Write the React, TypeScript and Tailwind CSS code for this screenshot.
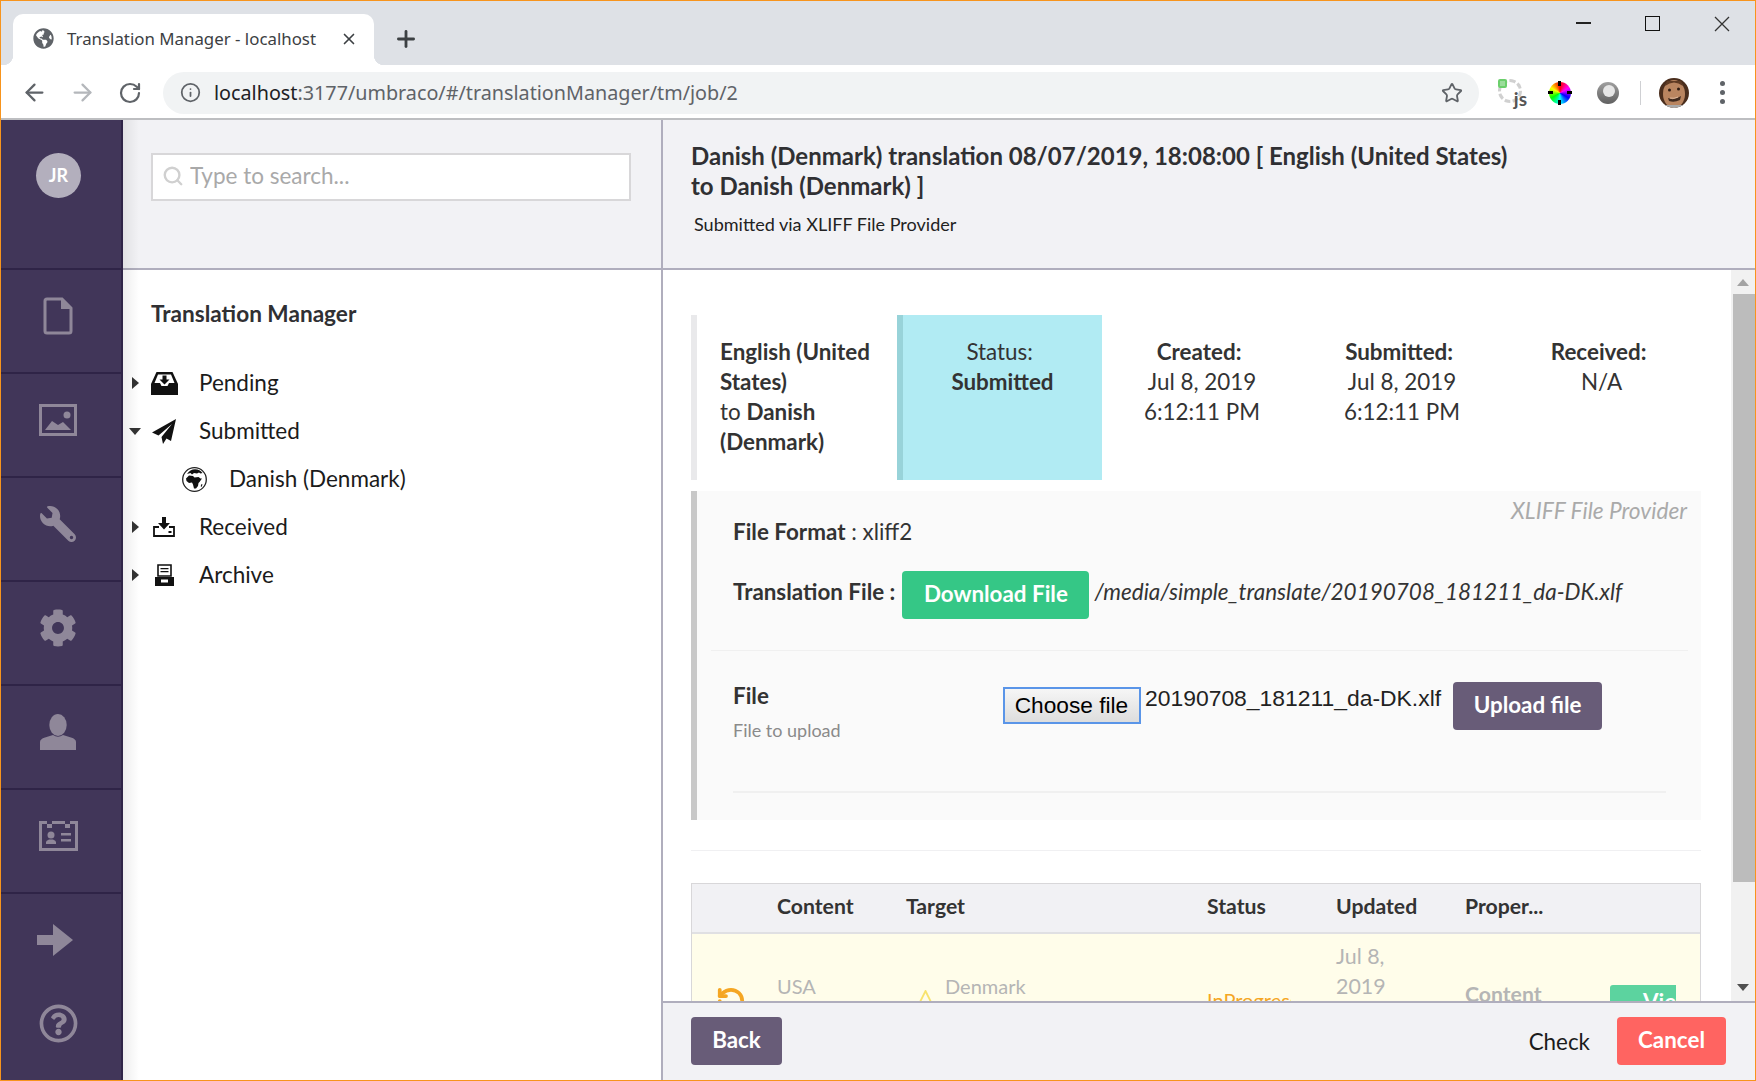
import React from "react";
import { FaGlobeAmericas, FaWrench, FaCog, FaRegQuestionCircle } from "react-icons/fa";
import { ArrowLeft, ArrowRight, RotateCw, RotateCcw, Info, Star, X, Plus, Search } from "lucide-react";

const lato = "[font-family:Lato,sans-serif]";

function Doc() {
  return (
    <svg width="30" height="38" viewBox="0 0 30 38" fill="none">
      <path d="M5 2h14l9 9v23a2 2 0 0 1-2 2H4a2 2 0 0 1-2-2V4a2 2 0 0 1 2-2z" stroke="currentColor" strokeWidth="3" />
      <path d="M18 2v10h10z" fill="currentColor" />
    </svg>
  );
}
function Picture() {
  return (
    <svg width="38" height="32" viewBox="0 0 38 32" fill="none">
      <rect x="1.5" y="1.5" width="35" height="29" stroke="currentColor" strokeWidth="3" />
      <circle cx="28" cy="11" r="3.5" fill="currentColor" />
      <path d="M6 26l7-9 6 4 5-3 8 8z" fill="currentColor" />
    </svg>
  );
}
function Person() {
  return (
    <svg width="36" height="36" viewBox="0 0 36 36" fill="currentColor">
      <ellipse cx="18" cy="11" rx="8.7" ry="11" />
      <path d="M0 36v-8q0-3 5-4.500l8-2.500q5 3.500 10 0l8 2.500q5 1.500 5 4.500v8z" />
    </svg>
  );
}
function IdCard() {
  return (
    <svg width="39" height="30" viewBox="0 0 39 30" fill="none">
      <path d="M8 1.500H1.500v27h36v-27H31M13 1.500h13" stroke="currentColor" strokeWidth="3" />
      <rect x="8" y="3" width="5" height="4" fill="currentColor" />
      <rect x="26" y="3" width="5" height="4" fill="currentColor" />
      <circle cx="12" cy="14" r="3.500" fill="currentColor" />
      <path d="M7 23v-2q0-1.500 3-2.500h4q3 1 3 2.500v2z" fill="currentColor" />
      <rect x="22" y="12" width="10" height="2.500" fill="currentColor" />
      <rect x="22" y="18" width="10" height="2.500" fill="currentColor" />
    </svg>
  );
}
function BigArrow() {
  return (
    <svg width="36" height="32" viewBox="0 0 36 32" fill="currentColor">
      <path d="M0 11h16V0l20 16-20 16V21H0z" />
    </svg>
  );
}
function PendingIcon() {
  return (
    <svg width="27" height="23" viewBox="0 0 27 23">
      <path d="M5.500 0h16L27 12v11H0V12z" fill="#111" />
      <path d="M7 2.500h13l3.500 8.500h-5.500l-1.500 3h-6l-1.500-3H3.500z" fill="#fff" />
      <path d="M11.500 3.500h4v4h3l-5 5-5-5h3z" fill="#111" />
    </svg>
  );
}
function PlaneIcon() {
  return (
    <svg width="24" height="25" viewBox="0 0 24 25">
      <path d="M24 0L0 13.500l6.500 3L20 5 9.500 18l1.500 7 3.500-5.500 4.500 2.500z" fill="#111" />
    </svg>
  );
}
function GlobeIcon() {
  return (
    <svg width="25" height="25" viewBox="0 0 25 25">
      <circle cx="12.500" cy="12.500" r="11.800" fill="#fff" stroke="#222" strokeWidth="1.300" />
      <path d="M5 7q3-4.500 8-4.700 5 .2 7.500 3.700l-2 .5-1.500-1-2 1-3-.5-2 1.500-1.500-1.500z" fill="#111" />
      <path d="M4 11.500l3-3 4 .5 1.500 1.500 4-.5 2 1.500 1.500 0-2.500 3.500-1 1-.5 3-2 2.500h-2l-1-4-1-2-3 .5-2.500-2z" fill="#111" />
      <path d="M19.500 17l1 .5-1 2.500-.8-.8z" fill="#111" />
    </svg>
  );
}
function ReceivedIcon() {
  return (
    <svg width="22" height="20" viewBox="0 0 22 20">
      <path d="M9 0h4v6h4l-6 6.500L5 6h4z" fill="#111" />
      <path d="M6 10H1v9h20v-9h-5" fill="none" stroke="#111" strokeWidth="1.800" />
      <rect x="15.500" y="14" width="3" height="2" fill="#111" />
    </svg>
  );
}
function ArchiveIcon() {
  return (
    <svg width="19" height="22" viewBox="0 0 19 22">
      <path d="M3 1h13v11H3z" fill="none" stroke="#111" strokeWidth="1.600" />
      <path d="M5.500 4h8v1.300h-8zM5.500 7h8v1.300h-8z" fill="#111" />
      <path d="M0 13h19v9H0z" fill="#111" />
      <path d="M6 15.500h7v3H6z" fill="#fff" />
    </svg>
  );
}
function TreeRow({ open, icon, label, indent }: { open?: boolean; icon: React.ReactNode; label: string; indent?: boolean }) {
  return (
    <div className="flex h-[48px] items-center">
      <div className="flex w-[24px] shrink-0 justify-center">
        {indent ? null : open ? (
          <svg width="12" height="7" viewBox="0 0 12 7"><path d="M0 0h12L6 7z" fill="#333" /></svg>
        ) : (
          <svg width="7" height="12" viewBox="0 0 7 12"><path d="M0 0l7 6-7 6z" fill="#333" /></svg>
        )}
      </div>
      <div className={indent ? "ml-[35px] mr-[22px] flex w-[25px] shrink-0 justify-center" : "mr-[18px] flex w-[34px] shrink-0 justify-center"}>{icon}</div>
      <div className="text-[22.5px] text-[#1b1b1b]">{label}</div>
    </div>
  );
}
function SideItem({ children }: { children: React.ReactNode }) {
  return <div className="flex h-[104px] items-start justify-center border-b-2 border-[#2f2447] pr-[6px] pt-[26px]"><div className="flex h-[40px] items-center justify-center">{children}</div></div>;
}

function WindowControls() {
  return (
    <div className="ml-auto flex h-full items-start">
      <div className="mt-[21px] h-[2px] w-[15px] bg-[#222]" />
      <div className="ml-[54px] mt-[15px] h-[15px] w-[15px] border-[1.5px] border-[#111]" />
      <svg className="ml-[54px] mr-[25px] mt-[15px]" width="16" height="16" viewBox="0 0 16 16"><path d="M1 1l14 14M15 1L1 15" stroke="#333" strokeWidth="1.300" /></svg>
    </div>
  );
}

function Extensions() {
  return (
    <>
      <div className="relative ml-[19px] h-[28px] w-[28px]">
        <div className="h-[24px] w-[24px] rounded-full border-[3px] border-dashed border-[#d0d0d0]" />
        <div className="absolute left-0 top-0 h-[9px] w-[9px] rounded-[2px] border-2 border-[#6ccf6c] bg-[#9bdd9b]" />
        <div className="absolute -right-[1px] bottom-[0px] [font-family:Lato,sans-serif] text-[19px] leading-[17px] font-bold text-[#555]">js</div>
      </div>
      <div className="relative ml-[23px] h-[22px] w-[22px] rounded-full bg-[conic-gradient(#ff0000,#ff00ff,#0000ff,#00ffff,#00ff00,#ffff00,#ff0000)]">
        <div className="absolute left-[9px] -top-[1px] h-[5px] w-[3px] bg-black" />
        <div className="absolute left-[9px] -bottom-[1px] h-[5px] w-[3px] bg-black" />
        <div className="absolute -left-[1px] top-[9px] h-[3px] w-[5px] bg-black" />
        <div className="absolute -right-[1px] top-[9px] h-[3px] w-[5px] bg-black" />
      </div>
      <div className="ml-[26px] flex h-[22px] w-[22px] items-center justify-center rounded-full bg-gradient-to-b from-[#a0a0a0] to-[#606060]">
        <div className="ml-[2px] -mt-[3px] h-[12px] w-[12px] rounded-full bg-[#e6e6e6]" />
      </div>
      <div className="ml-[21px] h-[24px] w-[1px] bg-[#cfd0d3]" />
      <svg className="ml-[18px]" width="30" height="30" viewBox="0 0 30 30">
        <defs><clipPath id="av"><circle cx="15" cy="15" r="15" /></clipPath></defs>
        <g clipPath="url(#av)">
          <rect width="30" height="30" fill="#4a2e1d" />
          <ellipse cx="15" cy="16" rx="11" ry="14" fill="#b98560" />
          <path d="M6 8q9-7 18 0l-2-5H8z" fill="#5f3b24" />
          <circle cx="10.500" cy="12" r="1.500" fill="#2e1c12" />
          <circle cx="19.500" cy="11" r="1.500" fill="#2e1c12" />
          <path d="M9 20q6 3 13-2l-1 4q-6 3-11 1z" fill="#3f2a1f" />
          <path d="M11 20q4 1 8-1" stroke="#d9b59a" strokeWidth="1" fill="none" />
          <rect y="27" width="30" height="3" fill="#a9a9a9" />
        </g>
      </svg>
    </>
  );
}

function Chrome() {
  return (
    <div className="shrink-0 [font-family:'Noto_Sans',sans-serif]">
      <div className="flex h-[64px] bg-[#dee1e6] pl-[12px]">
        <div className="relative mt-[13px] flex h-[51px] w-[361px] items-center rounded-t-[10px] bg-white pb-[2px] pl-[20px]">
          <div className="absolute -left-[10px] bottom-0 h-[10px] w-[10px] bg-[radial-gradient(circle_at_0_0,#dee1e6_10px,#ffffff_10.5px)]" />
          <div className="absolute -right-[10px] bottom-0 h-[10px] w-[10px] bg-[radial-gradient(circle_at_100%_0,#dee1e6_10px,#ffffff_10.5px)]" />
          <FaGlobeAmericas size={21} color="#5f6368" />
          <span className="ml-[13px] w-[273px] text-[16.850px] text-[#3c4043] whitespace-nowrap">Translation Manager - localhost</span>
          <X size={18} color="#3c4043" strokeWidth={2.2} />
        </div>
        <div className="ml-[19px] mt-[25px] h-[26px] text-[#3c4043]"><Plus size={26} strokeWidth={2.6} /></div>
        <WindowControls />
      </div>
      <div className="flex h-[55px] items-center border-b-2 border-[#bdbec1] bg-white pb-[3px] pt-[5px]">
        <ArrowLeft className="ml-[20px]" size={27} color="#5f6368" strokeWidth={2} />
        <ArrowRight className="ml-[21px]" size={27} color="#b4b7bb" strokeWidth={2} />
        <RotateCw className="ml-[22px]" size={24} color="#5f6368" strokeWidth={2.2} />
        <div className="ml-[21px] flex h-[42px] w-[1316px] items-center rounded-full bg-[#f1f3f4] pl-[17px] pr-[16px]">
          <Info size={21} color="#5f6368" strokeWidth={2} />
          <div className="ml-[13px] flex-1 text-[19.750px] whitespace-nowrap text-[#5f6368]"><span className="text-[#202124]">localhost</span>:3177/umbraco/#/translationManager/tm/job/2</div>
          <Star size={22} color="#5f6368" strokeWidth={2} />
        </div>
        <Extensions />
        <div className="ml-[31px] flex flex-col gap-[4px]">
          <div className="h-[5px] w-[5px] rounded-full bg-[#5f6368]" />
          <div className="h-[5px] w-[5px] rounded-full bg-[#5f6368]" />
          <div className="h-[5px] w-[5px] rounded-full bg-[#5f6368]" />
        </div>
      </div>
    </div>
  );
}

function Sidebar() {
  return (
    <div className="flex w-[122px] shrink-0 flex-col border-r-2 border-[#2f2447] bg-[#413659] text-[#8f8799]">
      <div className="flex h-[150px] shrink-0 justify-center border-b-2 border-[#2f2447] pr-[5px] pt-[33px]">
        <div className="flex h-[45px] w-[45px] items-center justify-center rounded-full bg-[#b3afbd] text-[18px] font-bold text-white">JR</div>
      </div>
      <SideItem><Doc /></SideItem>
      <SideItem><Picture /></SideItem>
      <SideItem><FaWrench size={36} className="-scale-x-100" /></SideItem>
      <SideItem><FaCog size={38} /></SideItem>
      <SideItem><Person /></SideItem>
      <SideItem><IdCard /></SideItem>
      <div className="flex flex-col items-center pr-[6px] pt-[30px]">
        <div className="-ml-[6px]"><BigArrow /></div>
        <FaRegQuestionCircle size={39} className="mt-[48px]" />
      </div>
    </div>
  );
}

function TreePanel() {
  return (
    <div className="relative flex w-[540px] shrink-0 flex-col border-r-2 border-[#b0aebd] bg-white">
      <div className="pointer-events-none absolute inset-y-0 left-0 w-[16px] bg-gradient-to-r from-[#00000012] to-transparent" />
      <div className="h-[150px] shrink-0 border-b-2 border-[#b0aebd] bg-[#f2f2f5] pl-[28px] pt-[33px]">
        <div className="flex h-[48px] w-[480px] items-center border-2 border-[#d8d7d9] bg-white pb-[2px] pl-[9px]">
          <Search size={22} color="#d0d0d0" strokeWidth={2.6} />
          <input readOnly placeholder="Type to search..." className="ml-[6px] flex-1 bg-transparent text-[22.5px] outline-none placeholder:text-[#a9a9a9]" />
        </div>
      </div>
      <div className="pt-[29px]">
        <div className="pl-[28px] text-[22.6px] leading-[30px] font-bold text-[#303033]">Translation Manager</div>
        <div className="mt-[30px]">
          <TreeRow icon={<PendingIcon />} label="Pending" />
          <TreeRow open icon={<PlaneIcon />} label="Submitted" />
          <TreeRow indent icon={<GlobeIcon />} label="Danish (Denmark)" />
          <TreeRow icon={<ReceivedIcon />} label="Received" />
          <TreeRow icon={<ArchiveIcon />} label="Archive" />
        </div>
      </div>
    </div>
  );
}

function InfoRow() {
  return (
    <div className="grid h-[165px] w-[1010px] grid-cols-[206px_205px_200px_200px_199px] text-center text-[22.4px] leading-[30px] text-[#333]">
      <div className="border-l-[6px] border-[#e9e9eb] pl-[23px] pt-[22px] text-left">
        <b>English (United States)</b><br />to <b>Danish (Denmark)</b>
      </div>
      <div className="border-l-[6px] border-[#98d3d9] bg-[#b1ebf3] pt-[22px]">Status:{"\u00a0"}<br /><b>Submitted</b></div>
      <div className="pt-[22px]"><b>Created:</b>{"\u00a0"}<br />Jul 8, 2019<br />6:12:11 PM</div>
      <div className="pt-[22px]"><b>Submitted:</b>{"\u00a0"}<br />Jul 8, 2019<br />6:12:11 PM</div>
      <div className="pt-[22px]"><b>Received:</b>{"\u00a0"}<br />N/A</div>
    </div>
  );
}

function ProviderBox() {
  return (
    <div className="mt-[11px] h-[329px] w-[1010px] border-l-[6px] border-[#c8c8c8] bg-[#fafafa] text-[22.4px] leading-[30px] text-[#333]">
      <div className="flex justify-between pl-[36px] pr-[14px]">
        <div className="mt-[26px]"><b>File Format</b> : xliff2</div>
        <div className="mt-[5px] text-[22.7px] italic text-[#aaaaaa]">XLIFF File Provider</div>
      </div>
      <div className="mt-[24px] flex items-center pl-[36px]">
        <b className="mb-[6px] whitespace-nowrap">Translation File :</b>
        <div className="ml-[7px] flex h-[48px] w-[187px] items-center justify-center rounded-[4px] bg-[#35c786] pb-[2px] font-bold text-white">Download File</div>
        <i className="mb-[6px] ml-[5px] text-[22.5px] whitespace-nowrap">/media/simple_translate/20190708_181211_da-DK.xlf</i>
      </div>
      <div className="ml-[14px] mt-[31px] h-[1px] w-[977px] bg-[#f0f0f0]" />
      <div className="ml-[36px] mr-[35px] mt-[30px] flex h-[112px] items-start border-b-2 border-[#f0f0f0]">
        <div className="w-[270px]">
          <b>File</b>
          <div className="mt-[7px] text-[18px] leading-[24px] text-[#8a8a8a]">File to upload</div>
        </div>
        <div className="mt-[6px] flex h-[37px] w-[138px] shrink-0 items-center justify-center border-2 border-[#5a95e8] bg-gradient-to-b from-[#f6f6f6] to-[#dddddd] pb-[1px] pr-[1px] [font-family:'Liberation_Sans',sans-serif] text-[22.7px] text-black">Choose file</div>
        <div className="ml-[4px] mt-[2px] [font-family:'Liberation_Sans',sans-serif] text-[22.9px] whitespace-nowrap text-[#222]">20190708_181211_da-DK.xlf</div>
        <div className="ml-[12px] mt-[1px] flex h-[48px] w-[149px] shrink-0 items-center justify-center rounded-[4px] bg-[#685c78] pb-[2px] font-bold text-white">Upload file</div>
      </div>
    </div>
  );
}

function JobTable() {
  return (
    <div className="mt-[32px] w-[1010px] border border-[#d8d7d9] text-[22.4px] leading-[30px]">
      <div className="grid h-[50px] grid-cols-[85px_129px_301px_129px_129px_145px_1fr] items-center border-b-2 border-[#e0e0e3] bg-[#f1f1f4] pb-[4px] text-[21.2px] font-bold text-[#333] [&>*]:whitespace-nowrap">
        <div /><div>Content</div><div>Target</div><div>Status</div><div>Updated</div><div>Proper...</div><div />
      </div>
      <div className="grid h-[140px] grid-cols-[85px_129px_301px_129px_129px_145px_1fr] bg-[#fffdea] text-[#b5b5b5]">
        <div className="flex justify-end pr-[31px] pt-[52px]"><RotateCcw size={30} color="#f5a623" strokeWidth={3} /></div>
        <div className="pt-[37px] text-[20px]">USA</div>
        <div className="flex items-start pt-[37px] text-[20px]">
          <svg className="ml-[12px] mr-[12px] mt-[19px]" width="15" height="15" viewBox="0 0 15 15"><path d="M7.500 1l6.500 13H1z" fill="none" stroke="#f8e36d" strokeWidth="1.800" /></svg>
          <span>Denmark</span>
        </div>
        <div className="w-[84px] overflow-hidden pt-[51px] text-[20px] whitespace-nowrap text-[#f5a623]">InProgress</div>
        <div className="pt-[7px] text-[21.4px]">Jul 8,<br />2019</div>
        <div className="pt-[45px] text-[21.2px] font-bold">Content</div>
        <div className="w-[66px] overflow-hidden pt-[51px]"><div className="flex h-[34px] w-[100px] items-center rounded-[3px] bg-[#5cd39f] pl-[33px] font-bold text-white">View</div></div>
      </div>
    </div>
  );
}

function Main() {
  return (
    <div className="flex min-w-0 flex-1 flex-col">
      <div className="h-[150px] shrink-0 border-b-2 border-[#b0aebd] bg-[#f2f2f5] pl-[28px] pt-[21px]">
        <div className="w-[830px] text-[24px] leading-[30px] font-bold text-[#303033]">Danish (Denmark) translation 08/07/2019, 18:08:00 [ English (United States) to Danish (Denmark) ]</div>
        <div className="ml-[3px] mt-[10px] text-[18.05px] leading-[26px] text-[#222]">Submitted via XLIFF File Provider</div>
      </div>
      <div className="flex min-h-0 flex-1">
        <div className="min-w-0 flex-1 overflow-hidden pl-[28px] pt-[45px]">
          <InfoRow />
          <ProviderBox />
          <div className="mt-[30px] h-[1px] w-[1010px] bg-[#f0f0f2]" />
          <JobTable />
        </div>
        <div className="flex w-[24px] shrink-0 flex-col items-center bg-[#f1f1f1]">
          <svg className="mt-[9px]" width="12" height="7" viewBox="0 0 12 7"><path d="M6 0l6 7H0z" fill="#a3a3a3" /></svg>
          <div className="ml-[2px] mt-[8px] h-[588px] w-[22px] bg-[#bcbcbc]" />
          <svg className="mt-[102px]" width="12" height="7" viewBox="0 0 12 7"><path d="M0 0h12L6 7z" fill="#505050" /></svg>
        </div>
      </div>
      <div className="flex h-[79px] shrink-0 items-start border-t-2 border-[#b0aebd] bg-[#f2f2f5] pl-[28px] pr-[29px] pt-[14px] text-[22.4px] text-white">
        <div className="flex h-[48px] w-[91px] items-center justify-center rounded-[4px] bg-[#685c78] pb-[2px] font-bold">Back</div>
        <div className="ml-auto mt-[8px] text-[#1b1b1b]">Check</div>
        <div className="ml-[27px] flex h-[48px] w-[109px] items-center justify-center rounded-[4px] bg-[#ff6461] pb-[2px] font-bold">Cancel</div>
      </div>
    </div>
  );
}

export default function App() {
  return (
    <div className="box-border flex h-[1081px] w-[1756px] flex-col overflow-hidden border border-[#f7941d] bg-white">
      <Chrome />
      <div className={`flex min-h-0 flex-1 ${lato}`}>
        <Sidebar />
        <TreePanel />
        <Main />
      </div>
    </div>
  );
}
